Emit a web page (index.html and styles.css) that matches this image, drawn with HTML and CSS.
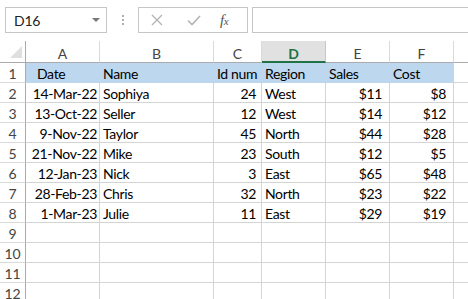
FILE: index.html
```html
<!DOCTYPE html>
<html>
<head>
<meta charset="utf-8">
<link rel="stylesheet" href="styles.css">
</head>
<body>
<div class="toolbar">
  <div class="namebox"><span class="nametext">D16</span><span class="ddarrow"></span></div>
  <div class="dots"><span></span><span></span><span></span></div>
  <div class="fxbox">
    <svg class="ico" width="14" height="14" viewBox="0 0 14 14"><path d="M2 2 L12 12 M12 2 L2 12" stroke="#b4b4b4" stroke-width="1.4" fill="none"/></svg>
    <svg class="ico" width="16" height="14" viewBox="0 0 16 14"><path d="M2 7.5 L6 11.5 L14 3" stroke="#b4b4b4" stroke-width="1.6" fill="none"/></svg>
    <span class="fx">f<span class="fxx">x</span></span>
  </div>
  <div class="formula"></div>
</div>
<div class="sheetwrap">
<div class="sheet">
  <div class="ch corner"><span class="tri"></span></div>
  <div class="ch">A</div><div class="ch">B</div><div class="ch">C</div><div class="ch sel">D</div><div class="ch">E</div><div class="ch">F</div><div class="ch"></div>

  <div class="rh">1</div>
  <div class="c hl ind">Date</div><div class="c hl">Name</div><div class="c hl">Id num</div><div class="c hl">Region</div><div class="c hl">Sales</div><div class="c hl">Cost</div><div class="c"></div>

  <div class="rh">2</div>
  <div class="c r">14-Mar-22</div><div class="c">Sophiya</div><div class="c r id">24</div><div class="c">West</div><div class="c r cur">$11</div><div class="c r cur">$8</div><div class="c"></div>

  <div class="rh">3</div>
  <div class="c r">13-Oct-22</div><div class="c">Seller</div><div class="c r id">12</div><div class="c">West</div><div class="c r cur">$14</div><div class="c r cur">$12</div><div class="c"></div>

  <div class="rh">4</div>
  <div class="c r">9-Nov-22</div><div class="c">Taylor</div><div class="c r id">45</div><div class="c">North</div><div class="c r cur">$44</div><div class="c r cur">$28</div><div class="c"></div>

  <div class="rh">5</div>
  <div class="c r">21-Nov-22</div><div class="c">Mike</div><div class="c r id">23</div><div class="c">South</div><div class="c r cur">$12</div><div class="c r cur">$5</div><div class="c"></div>

  <div class="rh">6</div>
  <div class="c r">12-Jan-23</div><div class="c">Nick</div><div class="c r id">3</div><div class="c">East</div><div class="c r cur">$65</div><div class="c r cur">$48</div><div class="c"></div>

  <div class="rh">7</div>
  <div class="c r">28-Feb-23</div><div class="c">Chris</div><div class="c r id">32</div><div class="c">North</div><div class="c r cur">$23</div><div class="c r cur">$22</div><div class="c"></div>

  <div class="rh">8</div>
  <div class="c r">1-Mar-23</div><div class="c">Julie</div><div class="c r id">11</div><div class="c">East</div><div class="c r cur">$29</div><div class="c r cur">$19</div><div class="c"></div>

  <div class="rh">9</div>
  <div class="c"></div><div class="c"></div><div class="c"></div><div class="c"></div><div class="c"></div><div class="c"></div><div class="c"></div>

  <div class="rh">10</div>
  <div class="c"></div><div class="c"></div><div class="c"></div><div class="c"></div><div class="c"></div><div class="c"></div><div class="c"></div>

  <div class="rh">11</div>
  <div class="c"></div><div class="c"></div><div class="c"></div><div class="c"></div><div class="c"></div><div class="c"></div><div class="c"></div>

  <div class="rh">12</div>
  <div class="c"></div><div class="c"></div><div class="c"></div><div class="c"></div><div class="c"></div><div class="c"></div><div class="c"></div>
</div>
</div>
</body>
</html>
```
FILE: styles.css
```css
html, body {
  margin: 0;
  padding: 0;
  background: #ffffff;
  overflow: hidden;
  width: 468px;
  height: 299px;
}
body {
  font-family: Lato, "Liberation Sans", sans-serif;
  color: #000;
}
.toolbar {
  height: 41px;
  box-sizing: border-box;
  padding: 7px 0 0 5px;
  display: flex;
  align-items: flex-start;
}
.namebox {
  width: 102px;
  height: 26px;
  box-sizing: border-box;
  border: 1px solid #c6c6c6;
  display: flex;
  align-items: center;
  justify-content: space-between;
  padding: 0 6px 0 8px;
}
.nametext {
  font-size: 14px;
  letter-spacing: -0.2px;
  color: #222;
}
.ddarrow {
  width: 0;
  height: 0;
  border-left: 4px solid transparent;
  border-right: 4px solid transparent;
  border-top: 4px solid #777;
}
.dots {
  width: 31px;
  height: 26px;
  display: flex;
  flex-direction: column;
  align-items: center;
  justify-content: center;
  gap: 2px;
}
.dots span {
  width: 2px;
  height: 2px;
  background: #b0b0b0;
}
.fxbox {
  width: 110px;
  height: 26px;
  box-sizing: border-box;
  border: 1px solid #c6c6c6;
  display: flex;
  align-items: center;
  padding-left: 11px;
}
.fxbox .ico:first-child {
  margin-right: 22px;
}
.fxbox .ico:nth-child(2) {
  margin-right: 18px;
}
.fx {
  font-family: "Liberation Serif", serif;
  font-style: italic;
  font-size: 15px;
  color: #555;
  letter-spacing: -0.5px;
}
.fxx {
  font-size: 11px;
}
.formula {
  flex: 1;
  height: 26px;
  margin-left: 4px;
  margin-right: -4px;
  box-sizing: border-box;
  border: 1px solid #c6c6c6;
}
.sheetwrap {
  width: 468px;
  overflow: hidden;
}
.sheet {
  display: grid;
  width: 520px;
  grid-template-columns: 26px 74px 114px 48px 64px 64px 64px 66px;
  grid-auto-rows: 20px;
  grid-template-rows: 22px;
  font-size: 14px;
  letter-spacing: -0.35px;
}
.ch {
  box-sizing: border-box;
  border-right: 1px solid #dadada;
  border-bottom: 1px solid #ababab;
  text-align: center;
  color: #444;
  font-size: 14px;
  padding-top: 4px;
  line-height: 17px;
  letter-spacing: 0;
}
.ch.corner {
  border-right: 1px solid #ababab;
  position: relative;
}
.tri {
  position: absolute;
  right: 3px;
  bottom: 4px;
  width: 0;
  height: 0;
  border-left: 12px solid transparent;
  border-bottom: 12px solid #dfdfdf;
}
.ch.sel {
  background: #e1e1e1;
  color: #217346;
  font-weight: bold;
  border-bottom: 2px solid #217346;
  border-right-color: #c6c6c6;
}
.rh {
  box-sizing: border-box;
  border-right: 1px solid #ababab;
  border-bottom: 1px solid #dadada;
  text-align: center;
  color: #444;
  padding-top: 2px;
  line-height: 17px;
  letter-spacing: 0;
}
.c {
  box-sizing: border-box;
  border-right: 1px solid #d4d4d4;
  border-bottom: 1px solid #d4d4d4;
  padding: 2px 3px 0 3px;
  line-height: 17px;
  white-space: nowrap;
  overflow: hidden;
}
.c.hl {
  background: #bdd7ee;
  border-color: #bdd7ee;
}
.c.ind {
  padding-left: 11px;
}
.c.r {
  text-align: right;
  padding-right: 2px;
}
.c.id {
  padding-right: 5px;
}
.c.cur {
  padding-right: 7px;
}
```
